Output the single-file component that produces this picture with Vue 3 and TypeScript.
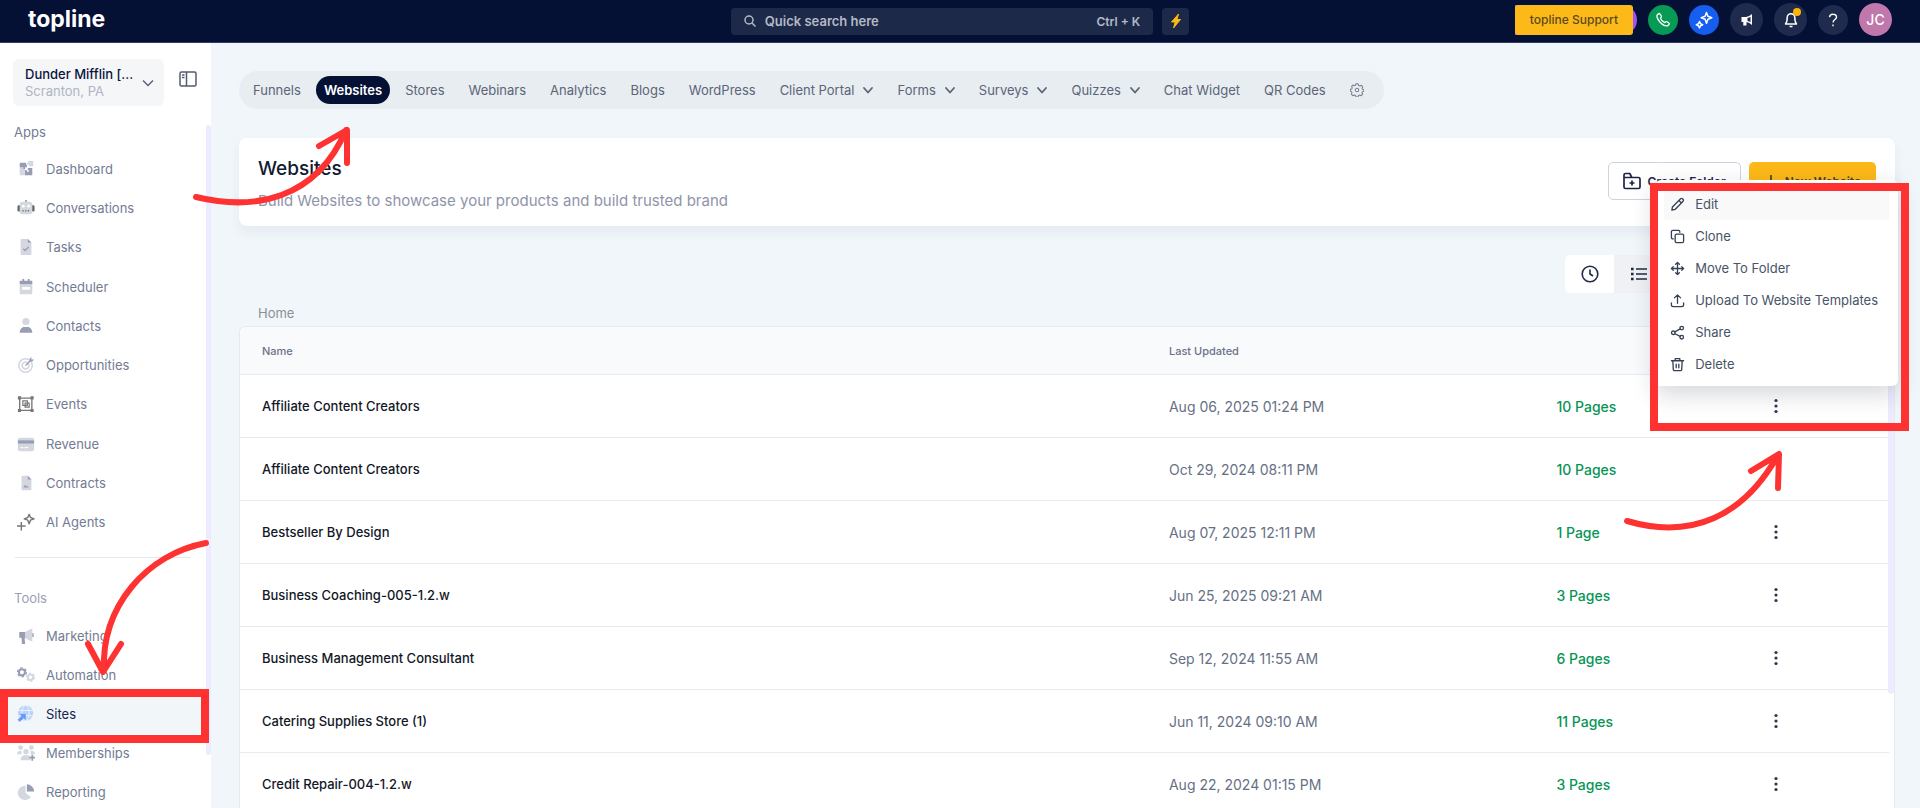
<script setup lang="ts">
import { ref } from 'vue'

interface NavItem {
  label: string
  icon: string
}

interface Tab {
  label: string
  menu?: boolean
}

interface Site {
  name: string
  updated: string
  pages: number
  actions: boolean
}

const dark = '#979db3'
const light = '#d5d7e0'

const navIcons: Record<string, string> = {
  dashboard: `<path fill="${light}" d="M12 1h6v6h-5V5h-2V3h2zM3 8h6v4h2v5H3z"/><path fill="${dark}" d="M4 3h6v2h1v3H9v2H7V8H3V4a1 1 0 0 1 1-1zM9 11h2v2h2v-2h-1V9h5v7a1 1 0 0 1-1 1H9z"/>`,
  conversations: `<path fill="#777" d="M9.300 1h1.400v3H9.300z"/><rect x="0.500" y="7" width="4" height="7" rx="1.500" fill="#666"/><rect x="15.500" y="7" width="4" height="7" rx="1.500" fill="#666"/><rect x="3" y="3" width="14" height="14" rx="3" fill="${light}"/><circle cx="7" cy="8" r="1.500" fill="#fff"/><circle cx="13" cy="8" r="1.500" fill="#fff"/><path stroke="#777" stroke-width="1.500" stroke-dasharray="1.500 1.500" d="M6 13h8"/>`,
  tasks: `<path fill="${light}" d="M5 1h7l4 4v13a1 1 0 0 1-1 1H5a1 1 0 0 1-1-1V2a1 1 0 0 1 1-1z"/><path fill="${dark}" d="M12 1l4 4h-4z"/><path d="M7 12l2 2 4-4" fill="none" stroke="${dark}" stroke-width="1.500"/>`,
  scheduler: `<path fill="${light}" d="M3 7h14v10a1 1 0 0 1-1 1H4a1 1 0 0 1-1-1z"/><path fill="${dark}" d="M3 3h3V1h2v2h4V1h2v2h3v4H3z"/><path fill="#fff" d="M5.500 10h9v3h-9z"/>`,
  contacts: `<circle cx="10" cy="5" r="4" fill="${light}"/><path fill="${dark}" d="M3 17.500c0-4 2.500-6.500 5-6.500h4c2.500 0 5 2.500 5 6.500z"/>`,
  opportunities: `<circle cx="9.500" cy="10.500" r="7.500" fill="none" stroke="${light}" stroke-width="1.800"/><circle cx="9.500" cy="10.500" r="3.800" fill="none" stroke="${light}" stroke-width="1.800"/><path fill="${dark}" d="M9 10l5-5V3l2-2v3h3l-2 2h-2l-5 5z"/>`,
  events: `<g fill="none" stroke="#777"><path stroke-width="1.500" d="M3 3.500h13.500v13.500H3z"/><path stroke-width="1.300" d="M6.500 6.500h5v5h-5zM9 9h4.500v4.500H9z"/></g><path fill="#777" d="M1 1.500h3.500V5H1zM15 1.500h3.500V5H15zM1 15.500h3.500V19H1zM15 15.500h3.500V19H15z"/>`,
  revenue: `<rect x="1" y="3" width="18" height="15" rx="2" fill="${light}"/><path fill="${dark}" d="M1 6h18v3.500H1z"/><path stroke="#fff" stroke-width="1.400" d="M4 14h3M8.500 14h4"/>`,
  contracts: `<path fill="${light}" d="M6 2h6l4 4v11a1 1 0 0 1-1 1H6a1 1 0 0 1-1-1V3a1 1 0 0 1 1-1z"/><path fill="${dark}" d="M12 2l4 4h-4z"/><path d="M7 15l2-3 1.500 2 1-1 2 2z" fill="${dark}"/>`,
  agents: `<path fill="none" stroke="#777" stroke-width="1.600" d="M13.500 1.500l1.500 3.500 4 1.500-4 1.500-1.500 4-1.500-4-4-1.500 4-1.500zM0 14.500h9.500M4.800 10v9.500" stroke-linejoin="round"/>`,
  marketing: `<path fill="${light}" d="M9 5.500l8-4v15l-8-4z"/><path fill="${dark}" d="M17 7h1.500v4H17zM2.500 5.500H9V12H8.500l.5 7H5.500L5 12H2.500z"/>`,
  automation: `<circle cx="5.500" cy="7" r="3.400" fill="none" stroke="${dark}" stroke-width="2.400"/><circle cx="5.500" cy="7" r="5" fill="none" stroke="${dark}" stroke-width="1.400" stroke-dasharray="2.600 2.630"/><circle cx="15" cy="12.500" r="3" fill="none" stroke="${light}" stroke-width="2.200"/><circle cx="15" cy="12.500" r="4.500" fill="none" stroke="${light}" stroke-width="1.400" stroke-dasharray="2.300 2.410"/>`,
  sites: `<circle cx="9.500" cy="9" r="8.500" fill="#b9d2fb"/><g fill="none" stroke="#f1f6f9"><ellipse cx="9.500" cy="9" rx="4" ry="8.500"/><path d="M1 6h17M1 12h17"/></g><path fill="#6a9bf4" stroke="#f1f6f9" stroke-width=".4" d="M2 9.500h8v8l-2.500-2.500L3 19 .5 16.500 4.800 12.200z"/>`,
  memberships: `<g fill="${light}"><circle cx="4" cy="4" r="2.700"/><circle cx="16" cy="4" r="2.700"/><circle cx="10" cy="8.500" r="3"/><path d="M0 11.500c0-3 2-4 5-4v4zM20 11.500c0-3-2-4-5-4v4zM4 18c0-3 1.500-5.500 4-5.500h4c1.500 0 2.500 1 3 2V18z"/></g><path stroke="${dark}" stroke-width="2" d="M17 12v6.500M13.800 15.200h6.200"/>`,
  reporting: `<path fill="${light}" d="M9.500 3v8l6 4.500A8 8 0 1 1 9.500 3z"/><path fill="${dark}" d="M11 1.500a8 8 0 0 1 8 8h-8z"/>`,
}

const apps: NavItem[] = [
  { label: 'Dashboard', icon: 'dashboard' },
  { label: 'Conversations', icon: 'conversations' },
  { label: 'Tasks', icon: 'tasks' },
  { label: 'Scheduler', icon: 'scheduler' },
  { label: 'Contacts', icon: 'contacts' },
  { label: 'Opportunities', icon: 'opportunities' },
  { label: 'Events', icon: 'events' },
  { label: 'Revenue', icon: 'revenue' },
  { label: 'Contracts', icon: 'contracts' },
  { label: 'AI Agents', icon: 'agents' },
]

const tools: NavItem[] = [
  { label: 'Marketing', icon: 'marketing' },
  { label: 'Automation', icon: 'automation' },
  { label: 'Sites', icon: 'sites' },
  { label: 'Memberships', icon: 'memberships' },
  { label: 'Reporting', icon: 'reporting' },
]

const activeTool = ref('Sites')
const activeTab = ref('Websites')

const tabs: Tab[] = [
  { label: 'Funnels' },
  { label: 'Websites' },
  { label: 'Stores' },
  { label: 'Webinars' },
  { label: 'Analytics' },
  { label: 'Blogs' },
  { label: 'WordPress' },
  { label: 'Client Portal', menu: true },
  { label: 'Forms', menu: true },
  { label: 'Surveys', menu: true },
  { label: 'Quizzes', menu: true },
  { label: 'Chat Widget' },
  { label: 'QR Codes' },
]

const sites: Site[] = [
  { name: 'Affiliate Content Creators', updated: 'Aug 06, 2025 01:24 PM', pages: 10, actions: true },
  { name: 'Affiliate Content Creators', updated: 'Oct 29, 2024 08:11 PM', pages: 10, actions: false },
  { name: 'Bestseller By Design', updated: 'Aug 07, 2025 12:11 PM', pages: 1, actions: true },
  { name: 'Business Coaching-005-1.2.w', updated: 'Jun 25, 2025 09:21 AM', pages: 3, actions: true },
  { name: 'Business Management Consultant', updated: 'Sep 12, 2024 11:55 AM', pages: 6, actions: true },
  { name: 'Catering Supplies Store (1)', updated: 'Jun 11, 2024 09:10 AM', pages: 11, actions: true },
  { name: 'Credit Repair-004-1.2.w', updated: 'Aug 22, 2024 01:15 PM', pages: 3, actions: true },
]

const menuItems: { label: string; icon: string }[] = [
  { label: 'Edit', icon: '<path d="M2 14l.6-3.400L11 2.200a1.800 1.800 0 0 1 2.700 2.600l-8.300 8.500zM9.500 3.700l2.700 2.600"/>' },
  { label: 'Clone', icon: '<rect x="5.500" y="5.500" width="9" height="9" rx="1.500"/><path d="M3.500 10.500H3A1.500 1.500 0 0 1 1.500 9V3A1.500 1.500 0 0 1 3 1.500h6A1.500 1.500 0 0 1 10.500 3v.5"/>' },
  { label: 'Move To Folder', icon: '<path d="M8 1.500v13M1.500 8h13M6 3.500l2-2 2 2M6 12.500l2 2 2-2M3.500 6l-2 2 2 2M12.500 6l2 2-2 2"/>' },
  { label: 'Upload To Website Templates', icon: '<path d="M1.500 10.500v2a2 2 0 0 0 2 2h9a2 2 0 0 0 2-2v-2M8 11V2M4.700 5.200L8 2l3.300 3.200"/>' },
  { label: 'Share', icon: '<circle cx="12.500" cy="3.300" r="1.900"/><circle cx="3.500" cy="8.300" r="1.900"/><circle cx="12.500" cy="13" r="1.900"/><path d="M5.200 7.300l5.600-3.100M5.200 9.300l5.600 2.800"/>' },
  { label: 'Delete', icon: '<path d="M1.500 4h13M5.500 4V1.800h5V4M3 4l.5 9.200a1.300 1.300 0 0 0 1.300 1.300h6.400a1.300 1.300 0 0 0 1.300-1.300L13 4M6.600 7.500v4M9.400 7.500v4"/>' },
]

const pageLabel = (n: number): string => `${n} ${n === 1 ? 'Page' : 'Pages'}`
</script>

<template>
  <div class="page">
    <header class="topbar">
      <a class="logo" href="#">topline</a>
      <div class="search-group">
        <label class="search">
          <svg viewBox="0 0 12 12" width="12" height="12" fill="none" stroke="currentColor" stroke-width="1.500"><circle cx="5" cy="5" r="4" /><path d="M8 8l3.500 3.500" /></svg>
          <input type="text" placeholder="Quick search here" aria-label="Quick search here" />
          <kbd>Ctrl + K</kbd>
        </label>
        <button class="bolt" aria-label="Quick actions">
          <svg viewBox="0 0 12 16" width="12" height="16"><path fill="#fcb917" stroke="#fcb917" stroke-linejoin="round" d="M8.500 1L1.500 9h3.700L3.500 15l7-8.500H7z" /></svg>
        </button>
      </div>
      <div class="actions">
        <div class="support-wrap">
          <button class="support">topline Support</button>
        </div>
        <button class="round phone" aria-label="Phone">
          <svg viewBox="0 0 16 16" width="16" height="16" fill="none" stroke="#fff" stroke-width="1.300" stroke-linejoin="round"><path d="M2 3.300l1.500-1.500q.8-.6 1.500.2l1.300 2q.4.800-.2 1.400l-.7.800q.6 2.300 4.300 4.400l.9-.7q.7-.5 1.400-.1l1.900 1.200q.8.700.1 1.500l-1.300 1.300Q8.500 14.500 4.500 9.500 1.400 5.500 2 3.300z" /></svg>
        </button>
        <button class="round blue" aria-label="AI assistant">
          <svg viewBox="0 0 18 18" width="18" height="18" fill="none" stroke="#fff" stroke-width="1.500" stroke-linejoin="round"><path d="M11.500 1.500l1.400 3.800 3.900 1.500-3.900 1.500-1.400 3.900-1.400-3.900-3.900-1.500 3.900-1.500zM4.500 10.500l1 2.200 2.200 1-2.200 1-1 2.200-1-2.200-2.200-1 2.200-1z" /></svg>
        </button>
        <button class="round large" aria-label="Announcements">
          <svg viewBox="0 0 14 14" width="14" height="14"><path fill="#fff" d="M1.500 4H6q3.500-.5 6-3v11q-2.500-2.500-5.500-3v3.500H3.300V9H1.500z" /><path fill="#1f2b4d" d="M7.500 5q2-.4 3-1.300v5.500Q9.500 8.400 7.500 8z" /></svg>
        </button>
        <button class="round large" aria-label="Notifications">
          <svg viewBox="0 0 14 16" width="14" height="16" fill="none" stroke="#fff" stroke-width="1.500" stroke-linejoin="round"><path d="M1.500 12h11q-1.700-1.700-1.700-6.500a3.800 3.800 0 0 0-7.600 0Q3.200 10.300 1.500 12zM5.500 14.500h3" /></svg>
          <span class="dot"></span>
        </button>
        <button class="round" aria-label="Help">
          <svg viewBox="0 0 10 14" width="10" height="14" fill="none" stroke="#fff" stroke-width="1.400"><path d="M1.500 4.200A3.400 3.400 0 0 1 5 1.200c2 0 3.500 1.200 3.500 3C8.500 6.500 5 6.500 5 9.500M5 11.500v1.800" /></svg>
        </button>
        <button class="round large avatar">JC</button>
      </div>
    </header>

    <div class="body">
      <aside class="sidebar">
        <div class="account">
          <button class="switcher">
            <span class="who"><strong>Dunder Mifflin [...</strong><small>Scranton, PA</small></span>
            <svg viewBox="0 0 12 8" width="12" height="8" fill="none" stroke="#5b6478" stroke-width="1.500"><path d="M1 1.500l5 5 5-5" /></svg>
          </button>
          <button class="collapse" aria-label="Collapse sidebar">
            <svg viewBox="0 0 18 16" width="18" height="16" fill="none" stroke="#555c72" stroke-width="1.500"><rect x="1" y="1" width="16" height="14" rx="1.500" /><path d="M7.500 1v14M3 4h2.500M3 6.500h2.500" /></svg>
          </button>
        </div>
        <h2 class="group">Apps</h2>
        <nav class="nav apps">
          <a v-for="item in apps" :key="item.label" href="#" class="nav-item">
            <svg viewBox="0 0 20 20" width="18" height="18" v-html="navIcons[item.icon]"></svg>
            <span>{{ item.label }}</span>
          </a>
        </nav>
        <hr />
        <h2 class="group muted">Tools</h2>
        <nav class="nav tools">
          <a v-for="item in tools" :key="item.label" href="#" class="nav-item" :class="{ active: item.label === activeTool }">
            <svg viewBox="0 0 20 20" width="18" height="18" v-html="navIcons[item.icon]"></svg>
            <span>{{ item.label }}</span>
          </a>
        </nav>
        <div class="scroll side-scroll"></div>
      </aside>

      <main class="main">
        <nav class="tabs">
          <button v-for="tab in tabs" :key="tab.label" class="tab" :class="{ selected: tab.label === activeTab }" @click="activeTab = tab.label">
            {{ tab.label }}
            <svg v-if="tab.menu" viewBox="0 0 10 7" width="10" height="7" fill="none" stroke="currentColor" stroke-width="1.800" stroke-linecap="round" stroke-linejoin="round"><path d="M1 1l4 4.500L9 1" /></svg>
          </button>
          <button class="tab gear" aria-label="Settings">
            <svg viewBox="0 0 16 16" width="14" height="14" fill="none" stroke="#7b8190" stroke-width="1.200" stroke-linejoin="round"><circle cx="8" cy="8" r="2" /><path d="M6.700 1h2.600l.5 1.800 1.700.7 1.600-.9 1.500 1.900-.8 1.500.5 1.200 1.500.4v1.800l-1.500.5-.6 1.300.8 1.600-1.700 1.700-1.600-.8-1.500.6-.5 1.700H6.800l-.5-1.700-1.500-.6-1.600.8-1.700-1.700.8-1.600-.6-1.300L.5 9.300V7.200L2 6.800l.6-1.500-.8-1.400L3.400 2.300l1.500.9 1.300-.5z" /></svg>
          </button>
        </nav>

        <section class="card">
          <div>
            <h1>Websites</h1>
            <p>Build Websites to showcase your products and build trusted brand</p>
          </div>
          <div class="card-actions">
            <button class="btn outline">
              <svg viewBox="0 0 18 18" width="18" height="18" fill="none" stroke="#1d2547" stroke-width="1.700" stroke-linejoin="round"><path d="M1 5.500h14.500A1.500 1.500 0 0 1 17 7v8a1.500 1.500 0 0 1-1.500 1.500h-13A1.500 1.500 0 0 1 1 15V3a1.500 1.500 0 0 1 1.500-1.500h4.300L8.800 5.500M9 8.500v5M6.500 11h5" /></svg>
              Create Folder
            </button>
            <button class="btn primary">
              <svg viewBox="0 0 14 14" width="14" height="14" stroke="#3d3a26" stroke-width="1.600"><path d="M7 1v12M1 7h12" /></svg>
              New Website
            </button>
          </div>
        </section>

        <div class="view-row">
          <div class="views">
            <button class="view on" aria-label="Recent">
              <svg viewBox="0 0 18 18" width="18" height="18" fill="none" stroke="#1f2a44" stroke-width="1.600"><circle cx="9" cy="9" r="7.800" /><path d="M9 4.500V9l3 2" /></svg>
            </button>
            <button class="view" aria-label="List">
              <svg viewBox="0 0 16 14" width="16" height="14" stroke="#1f2a44" stroke-width="1.700"><path d="M5 2h11M5 7h11M5 12h11" /><path stroke-width="2.600" d="M0 2h2.600M0 7h2.600M0 12h2.600" /></svg>
            </button>
            <button class="view" aria-label="Grid"></button>
          </div>
        </div>

        <a class="crumb" href="#">Home</a>

        <div class="table-box">
          <table>
            <colgroup><col class="c-name" /><col class="c-date" /><col class="c-pages" /><col /></colgroup>
            <thead>
              <tr><th>Name</th><th>Last Updated</th><th></th><th></th></tr>
            </thead>
            <tbody>
              <tr v-for="(site, i) in sites" :key="i">
                <td class="name">{{ site.name }}</td>
                <td class="date">{{ site.updated }}</td>
                <td><a href="#" class="pages">{{ pageLabel(site.pages) }}</a></td>
                <td>
                  <button v-if="site.actions" class="dots" :aria-label="`Actions for ${site.name}`">
                    <svg viewBox="0 0 4 16" width="4" height="16" fill="#2b3650"><circle cx="2" cy="2.500" r="1.600" /><circle cx="2" cy="8" r="1.600" /><circle cx="2" cy="13.500" r="1.600" /></svg>
                  </button>
                </td>
              </tr>
            </tbody>
          </table>
          <div class="scroll table-scroll"></div>
        </div>
      </main>
    </div>

    <div class="menu" role="menu">
      <button v-for="(item, i) in menuItems" :key="item.label" role="menuitem" class="menu-item" :class="{ hover: i === 0 }">
        <svg viewBox="0 0 16 16" width="15" height="15" fill="none" stroke="#344054" stroke-width="1.400" stroke-linecap="round" stroke-linejoin="round" v-html="item.icon"></svg>
        {{ item.label }}
      </button>
    </div>

    <div class="frame frame-sites"></div>
    <div class="frame frame-menu"></div>
    <svg class="arrow arrow-tab" viewBox="0 0 166 86" width="166" height="86"><path d="M8 73C66 87 128 76 158 6M131 22L159 6v33" /></svg>
    <svg class="arrow arrow-sites" viewBox="0 0 130 142" width="130" height="142"><path d="M125 5C66 16 20 68 23 133M7 106l15 28 18-28" /></svg>
    <svg class="arrow arrow-menu" viewBox="0 0 170 86" width="170" height="86"><path d="M7 73C72 92 124 68 158 7M131 23L159 6l-1 34" /></svg>
  </div>
</template>

<style>
body {
  margin: 0;
}
</style>

<style scoped>
.page {
  position: relative;
  display: flex;
  flex-direction: column;
  height: 100vh;
  overflow: hidden;
  background: #f1f6fa;
  font-family: Inter, "Liberation Sans", sans-serif;
  font-size: 13px;
  color: #5b6478;
}
button {
  font: inherit;
  color: inherit;
  border: 0;
  padding: 0;
  background: none;
  cursor: pointer;
}
a {
  color: inherit;
  text-decoration: none;
}
svg {
  flex: none;
}
.topbar {
  flex: none;
  display: grid;
  grid-template-columns: 1fr auto 1fr;
  align-items: center;
  height: 43px;
  padding: 0 28px;
  box-sizing: border-box;
  background: #041135;
  border-bottom: 1px solid #323c60;
}
.logo {
  color: #fff;
  font-size: 23px;
  line-height: 26px;
  font-weight: 700;
  padding-bottom: 4px;
}
.search-group {
  display: flex;
  gap: 9px;
}
.search {
  display: flex;
  align-items: center;
  gap: 9px;
  width: 22vw;
  height: 27px;
  padding: 0 13px;
  box-sizing: border-box;
  border-radius: 4px;
  background: #1d2949;
  color: #b4b9c8;
}
.search input {
  flex: 1;
  min-width: 0;
  padding: 0;
  border: 0;
  outline: 0;
  background: none;
  color: inherit;
  font: 600 13px Inter, sans-serif;
}
.search input::placeholder {
  color: #b4b9c8;
  opacity: 1;
}
.search kbd {
  font: 600 12px Inter, sans-serif;
}
.bolt {
  display: grid;
  place-items: center;
  width: 27px;
  height: 27px;
  border-radius: 4px;
  background: #1d2949;
}
.actions {
  display: flex;
  align-items: center;
  justify-content: flex-end;
  gap: 11px;
  padding-bottom: 3px;
}
.support-wrap {
  padding-right: 4px;
  border-radius: 0 15px 15px 0;
  background: #a052f5;
}
.support {
  display: block;
  height: 30px;
  padding: 0 15px;
  border-radius: 3px;
  background: #fcb917;
  color: #5a4a20;
  font-size: 12px;
  font-weight: 500;
}
.round {
  position: relative;
  display: grid;
  place-items: center;
  width: 30px;
  height: 30px;
  border-radius: 50%;
  background: #1f2b4d;
}
.large {
  width: 33px;
  height: 33px;
}
.phone {
  background: #069a55;
}
.blue {
  background: #155eef;
}
.dot {
  position: absolute;
  top: 5px;
  right: 6px;
  width: 8px;
  height: 8px;
  border-radius: 50%;
  background: #fdb400;
}
.avatar {
  background: #c077ac;
  color: #fff;
  font-size: 14px;
  font-weight: 500;
}
.body {
  flex: 1;
  min-height: 0;
  display: flex;
}
.sidebar {
  position: relative;
  flex: none;
  width: 211px;
  background: #fff;
}
.account {
  display: flex;
  align-items: center;
  gap: 15px;
  padding: 16px 0 0 13px;
}
.switcher {
  display: flex;
  align-items: center;
  justify-content: space-between;
  width: 151px;
  height: 47px;
  padding: 0 10px 0 12px;
  border-radius: 6px;
  background: #f4f6f8;
  text-align: left;
}
.who strong,
.who small {
  display: block;
  font-size: 13px;
  line-height: 17px;
  white-space: nowrap;
}
.who strong {
  font-weight: 500;
  color: #0a1440;
}
.who small {
  color: #b0b4c4;
}
.collapse {
  height: 24px;
  margin-bottom: 4px;
}
.group {
  margin: 18px 0 0 14px;
  font-size: 13px;
  line-height: 16px;
  font-weight: 400;
  color: #737b93;
}
.muted {
  margin-top: 32px;
  color: #9a9fb2;
}
.nav {
  display: grid;
  grid-auto-rows: 1fr;
}
.apps {
  height: 393px;
  margin-top: 9px;
}
.tools {
  height: 196px;
  margin-top: 10px;
}
.nav-item {
  display: flex;
  align-items: center;
  gap: 11px;
  padding-left: 17px;
  color: #737b93;
}
.active {
  background: #f1f6f9;
  color: #17224d;
}
hr {
  height: 1px;
  margin: 15px 20px 0 15px;
  border: 0;
  background: #e6e8ed;
}
.scroll {
  position: absolute;
  right: 0;
  border-radius: 3px;
  background: #ecebff;
}
.side-scroll {
  top: 82px;
  width: 5px;
  height: 630px;
}
.main {
  flex: 1;
  min-width: 0;
  padding: 28px 25px 0 28px;
}
.tabs {
  display: flex;
  align-items: center;
  gap: 6px;
  width: fit-content;
  height: 38px;
  padding: 0 11px 0 5px;
  box-sizing: border-box;
  border-radius: 19px;
  background: #e8edf1;
}
.tab {
  display: flex;
  align-items: center;
  gap: 9px;
  height: 28px;
  padding: 0 9px;
  border-radius: 14px;
  white-space: nowrap;
}
.selected {
  padding: 0 8px;
  background: #041135;
  color: #fff;
  font-weight: 600;
}
.card {
  display: flex;
  justify-content: space-between;
  align-items: flex-start;
  height: 88px;
  margin-top: 29px;
  padding: 19px 19px 0;
  box-sizing: border-box;
  border-radius: 8px;
  background: #fff;
  box-shadow: 0 6px 12px rgba(30, 50, 80, 0.06);
}
h1 {
  margin: 0;
  font-size: 19px;
  line-height: 24px;
  font-weight: 500;
  color: #111a30;
}
.card p {
  margin: 10px 0 0;
  font-size: 15px;
  line-height: 20px;
  color: #8f94a9;
}
.card-actions {
  display: flex;
  gap: 8px;
  padding-top: 5px;
}
.btn {
  display: flex;
  align-items: center;
  gap: 7px;
  height: 38px;
  padding: 0 15px;
  box-sizing: border-box;
  border-radius: 5px;
  font-size: 12px;
  font-weight: 600;
}
.outline {
  padding: 0 14px;
  border: 1px solid #cfd3e0;
  color: #1d2547;
}
.primary {
  background: #fcb917;
  color: #4a4224;
}
.view-row {
  display: flex;
  justify-content: flex-end;
  margin-top: 29px;
  padding-right: 182px;
}
.views {
  display: flex;
  width: 148px;
  height: 38px;
  border-radius: 5px;
  background: #eff1f4;
}
.view {
  display: grid;
  place-items: center;
  width: 49px;
}
.on {
  border-radius: 5px 0 0 5px;
  background: #fff;
}
.crumb {
  display: block;
  width: fit-content;
  margin: 10px 0 0 19px;
  line-height: 20px;
  color: #8a9096;
}
.table-box {
  position: relative;
  margin-top: 3px;
  padding-right: 5px;
  border: 1px solid #e6eaee;
  border-radius: 6px;
  background: linear-gradient(#f9fafc 47px, #fff 47px);
}
table {
  width: 100%;
  table-layout: fixed;
  border-collapse: collapse;
}
.c-name {
  width: 55%;
}
.c-date {
  width: 23.5%;
}
.c-pages {
  width: 12.6%;
}
th,
td {
  padding: 0 22px;
  text-align: left;
  border-bottom: 1px solid #e9ebf2;
}
th {
  height: 47px;
  font-size: 11px;
  font-weight: 500;
  color: #69728a;
}
td {
  height: 62px;
}
.name {
  color: #111827;
  font-weight: 500;
}
.date {
  color: #667085;
  font-size: 14px;
}
.pages {
  color: #079455;
  font-size: 14px;
  font-weight: 500;
}
.dots {
  display: grid;
  place-items: center;
  width: 24px;
  height: 24px;
}
.table-scroll {
  top: 48px;
  width: 6px;
  height: 319px;
}
.menu {
  position: absolute;
  top: 180px;
  right: 22px;
  padding: 8px 9px 6px;
  border-radius: 6px;
  background: #fff;
  box-shadow: 0 8px 24px rgba(20, 30, 50, 0.18);
}
.menu-item {
  display: flex;
  align-items: center;
  gap: 10px;
  width: 100%;
  height: 32px;
  padding: 0 11px 0 6px;
  color: #475467;
  white-space: nowrap;
}
.hover {
  background: #f9f9fa;
}
.frame {
  position: absolute;
  border: 8px solid #ff3232;
  box-sizing: border-box;
}
.frame-sites {
  top: 689px;
  left: 0;
  width: 209px;
  height: 54px;
}
.frame-menu {
  top: 183px;
  right: 11px;
  width: 259px;
  height: 248px;
}
.arrow {
  position: absolute;
  fill: none;
  stroke: #ff3232;
  stroke-width: 6px;
  stroke-linecap: round;
  stroke-linejoin: round;
}
.arrow-tab {
  top: 124px;
  left: 188px;
}
.arrow-sites {
  top: 538px;
  left: 81px;
}
.arrow-menu {
  top: 448px;
  right: 130px;
}
</style>
